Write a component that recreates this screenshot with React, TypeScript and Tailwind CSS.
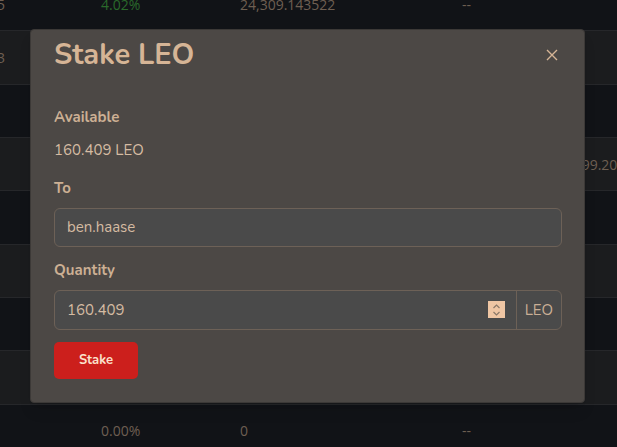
import React from 'react';

const rows = [
    { a: '5', b: '4.02%', green: true, c: '24,309.143522', d: '--' },
    { a: '3', b: '', c: '', d: '' },
    { a: '', b: '', c: '', d: '' },
    { a: '', b: '', c: '', d: '', e: '1,099.20' },
    { a: '', b: '', c: '', d: '' },
    { a: '', b: '', c: '', d: '' },
    { a: '', b: '', c: '', d: '' },
    { a: '', b: '', c: '', d: '' },
    { a: '', b: '0.00%', c: '0', d: '--' },
];

function TableBackground() {
    return (
        <div className="-mt-[22px] flex flex-col font-['Open_Sans',sans-serif] text-[14px] text-[#6e5f52]">
            {rows.map((r, i) => (
                <div
                    key={i}
                    className={`flex h-[53.33px] shrink-0 items-center border-b border-[#26272a] ${
                        i === 0 ? 'h-[52.33px]' : ''
                    } ${i % 2 === 0 ? 'bg-[#111317]' : 'bg-[#1b1c1e]'}`}
                >
                    <div className="w-[101px] shrink-0">
                        <span className="-ml-[3px]">{r.a}</span>
                    </div>
                    <div className={`w-[139px] shrink-0 ${r.green ? 'text-[#2a6a2b]' : ''}`}>{r.b}</div>
                    <div className="w-[222px] shrink-0">{r.c}</div>
                    <div className="w-[100px] shrink-0">{r.d}</div>
                    <div className="shrink-0 whitespace-nowrap">{r.e}</div>
                </div>
            ))}
        </div>
    );
}

function Spinner() {
    return (
        <div className="flex h-[17px] w-[17px] flex-col items-center justify-center bg-[#efc6a4]">
            <svg width="9" height="14" viewBox="0 0 9 14" fill="none" stroke="#8a7868" strokeWidth="1.2">
                <path d="M1.5 5 L4.5 2 L7.5 5" />
                <path d="M1.5 9 L4.5 12 L7.5 9" />
            </svg>
        </div>
    );
}

export default function App() {
    return (
        <div className="relative h-[447px] w-[617px] overflow-hidden bg-[#111317]">
            <TableBackground />

            {/* modal */}
            <div className="absolute inset-0 flex justify-start pt-[29px] pl-[30px]">
                <div className="flex h-[374px] w-[555px] flex-col rounded-[4px] border border-[#3c3937] bg-[#4c4845] pt-[7px] pr-[22px] pb-[23px] pl-[23px] font-['Nunito',Lato,sans-serif] shadow-lg">
                    <div className="flex items-center justify-between">
                        <h2 className="text-[29px] leading-[36px] font-bold text-[#d6b596]">Stake LEO</h2>
                        <button className="mr-[4px] text-[#d6b596]">
                            <svg width="12" height="12" viewBox="0 0 12 12" stroke="currentColor" strokeWidth="1.4">
                                <path d="M1 1 L11 11 M11 1 L1 11" />
                            </svg>
                        </button>
                    </div>

                    <div className="mt-[34px] text-[15px] leading-[20px] font-bold text-[#ccb094]">Available</div>
                    <div className="mt-[13px] text-[15px] leading-[20px] text-[#d5bba2]">160.409 LEO</div>

                    <div className="mt-[18px] text-[15px] leading-[20px] font-bold text-[#ccb094]">To</div>
                    <div className="mt-[10px] flex h-[40px] items-center rounded-[6px] border border-[#6d6157] bg-[#4a4a4a] px-3 text-[15px] text-[#d5bba2]">
                        ben.haase
                    </div>

                    <div className="mt-[13px] text-[15px] leading-[20px] font-bold text-[#ccb094]">Quantity</div>
                    <div className="mt-[10px] flex h-[40px] rounded-[6px] border border-[#6d6157] bg-[#4a4a4a] text-[15px]">
                        <div className="flex flex-1 items-center justify-between pr-[11px] pl-3 text-[#d5bba2]">
                            <span>160.409</span>
                            <Spinner />
                        </div>
                        <div className="flex items-center border-l border-[#6d6157] px-[8px] text-[#c9ae95]">LEO</div>
                    </div>

                    <button className="mt-[12px] h-[38px] w-[84px] rounded-[5px] bg-[#cc1f1c] text-[13px] font-bold text-[#fbe1cc]">
                        Stake
                    </button>
                </div>
            </div>
        </div>
    );
}
